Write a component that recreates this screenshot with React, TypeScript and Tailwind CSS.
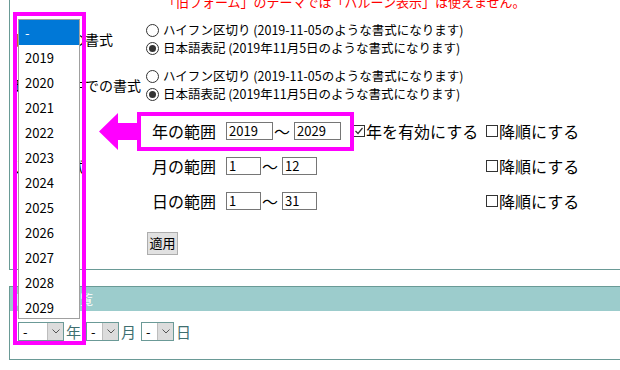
import React from "react";

const years = ["2019", "2020", "2021", "2022", "2023", "2024", "2025", "2026", "2027", "2028", "2029"];

function Radio({ checked, children }: { checked?: boolean; children: React.ReactNode }) {
  return (
    <div className="flex items-center h-[18px] text-[12.5px] leading-[18px] text-black whitespace-nowrap">
      <span className="w-[13px] h-[13px] rounded-full border border-[#333] bg-white flex items-center justify-center mr-[4px] shrink-0">
        {checked && <span className="w-[7px] h-[7px] rounded-full bg-[#333]" />}
      </span>
      {children}
    </div>
  );
}

function Check({ checked, label }: { checked?: boolean; label: string }) {
  return (
    <span className="flex items-center text-[16px] whitespace-nowrap">
      <span className="w-[12px] h-[12px] border border-[#333] mr-[1px] flex items-center justify-center">
        {checked && (
          <svg width="10" height="10" viewBox="0 0 10 10">
            <path d="M1.5 5 L4 7.5 L8.5 2" fill="none" stroke="#333" strokeWidth="1.2" />
          </svg>
        )}
      </span>
      {label}
    </span>
  );
}

function Box({ value, w }: { value: string; w: string }) {
  return (
    <div className={`${w} h-[18px] border border-[#767676] bg-white text-[13px] leading-[16px] pl-[2px] shrink-0`}>
      {value}
    </div>
  );
}

// 範囲の一行
function RangeRow({
  label,
  from,
  to,
  w,
  h,
  enable,
  side,
}: {
  label: string;
  from: string;
  to: string;
  w: string;
  h: string;
  enable?: boolean;
  side?: string;
}) {
  return (
    <div className={`grid grid-cols-[136px_1fr] ${h}`}>
      <div className="flex items-center text-[14px] pl-[5px] whitespace-nowrap">{side}</div>
      <div className="flex items-center">
        <div className="w-[207px] flex items-center">
          <span className="w-[80px] pl-[6px] text-[16px] whitespace-nowrap">{label}</span>
          <Box value={from} w={w} />
          <span className="w-[21px] text-[16px] pl-[1px]">〜</span>
          <Box value={to} w={w} />
        </div>
        <div className="w-[133px]">{enable && <Check checked label="年を有効にする" />}</div>
        <Check label="降順にする" />
      </div>
    </div>
  );
}

function Sel({ w, label }: { w: string; label: string }) {
  return (
    <div className="flex items-center">
      <div className={`flex h-[19px] border border-[#6b9a97] bg-white ${w}`}>
        <span className="flex-1 text-[13px] leading-[17px] pl-[4px]">-</span>
        <span className="w-[16px] h-full bg-[#dcdcdc] border-l border-[#bdbdbd] flex items-center justify-center">
          <svg width="8" height="5" viewBox="0 0 8 5">
            <path d="M0.5 0.5 L4 4 L7.5 0.5" fill="none" stroke="#555" strokeWidth="1" />
          </svg>
        </span>
      </div>
      <span className="text-[15px] leading-[19px] text-[#3f6f70] ml-[2px]">{label}</span>
    </div>
  );
}

export default function App() {
  return (
    <div className="relative w-[620px] h-[370px] overflow-hidden bg-white text-black font-['Noto_Sans_CJK_JP','Noto_Sans',sans-serif]">
      {/* ── 上のパネル ── */}
      <div className="flow-root ml-[9px] h-[270px] border-l border-b border-[#6a9a96]">
        <div className="-mt-[6px] h-[16px] pl-[153px] text-[13px] leading-[16px] text-[#ff0000] whitespace-nowrap">
          「旧フォーム」のテーマでは「バルーン表示」は使えません。
        </div>

        <div className="grid grid-cols-[136px_1fr] mt-[11px]">
          <div className="flex items-center text-[14px] pl-[5px] whitespace-nowrap">日付表示の書式</div>
          <div>
            <Radio>ハイフン区切り (2019-11-05のような書式になります)</Radio>
            <Radio checked>日本語表記 (2019年11月5日のような書式になります)</Radio>
          </div>
        </div>

        <div className="grid grid-cols-[136px_1fr] mt-[10px]">
          <div className="flex items-center text-[14px] pl-[5px] whitespace-nowrap">確認画面中での書式</div>
          <div>
            <Radio>ハイフン区切り (2019-11-05のような書式になります)</Radio>
            <Radio checked>日本語表記 (2019年11月5日のような書式になります)</Radio>
          </div>
        </div>

        <div className="mt-[11px]">
          <RangeRow label="年の範囲" from="2019" to="2029" w="w-[47px]" h="h-[34px]" enable />
          <RangeRow label="月の範囲" from="1" to="12" w="w-[35px]" h="h-[36px]" side="入力の形式" />
          <RangeRow label="日の範囲" from="1" to="31" w="w-[35px]" h="h-[33px]" />
        </div>

        <div className="pl-[137px] mt-[12px]">
          <button className="w-[31px] h-[23px] bg-[#e1e1e1] border border-[#adadad] text-[13px] leading-[20px]">
            適用
          </button>
        </div>
      </div>

      {/* ── 下のパネル ── */}
      <div className="ml-[9px] mt-[16px] h-[74px] border-l border-b border-[#6a9a96]">
        <div className="h-[25px] border-t border-[#6a9a96] bg-[#9ccccc] text-white text-[13px] leading-[24px] pl-[5px]">
          日付入力一覧
        </div>
        <div className="flex items-center pl-[8px] mt-[11px]">
          <div className="w-[68px]">
            <Sel w="w-[46px]" label="年" />
          </div>
          <div className="w-[55px]">
            <Sel w="w-[33px]" label="月" />
          </div>
          <Sel w="w-[33px]" label="日" />
        </div>
      </div>

      {/* ── 開いたドロップダウン ── */}
      <div className="absolute left-[18px] top-[19px] w-[62px] h-[300px] overflow-hidden border border-[#a0a0a0] bg-white">
        <div className="h-[25px] bg-[#0078d7] text-white text-[13px] leading-[25px] pl-[6px]">-</div>
        {years.map((y) => (
          <div key={y} className="h-[25px] text-[13px] leading-[25px] pl-[6px]">
            {y}
          </div>
        ))}
      </div>

      {/* ── 注釈 ── */}
      <div className="absolute left-[13px] top-[12px] w-[73px] h-[333px] border-[4px] border-[#ff00ff]" />
      <div className="absolute left-[137px] top-[112px] w-[217px] h-[39px] border-[4px] border-[#ff00ff]" />
      <svg className="absolute left-[99px] top-[112px]" width="40" height="40" viewBox="0 0 40 40">
        <polygon points="0,19.5 19,1 19,11 39,11 39,28 19,28 19,38" fill="#ff00ff" />
      </svg>
    </div>
  );
}
